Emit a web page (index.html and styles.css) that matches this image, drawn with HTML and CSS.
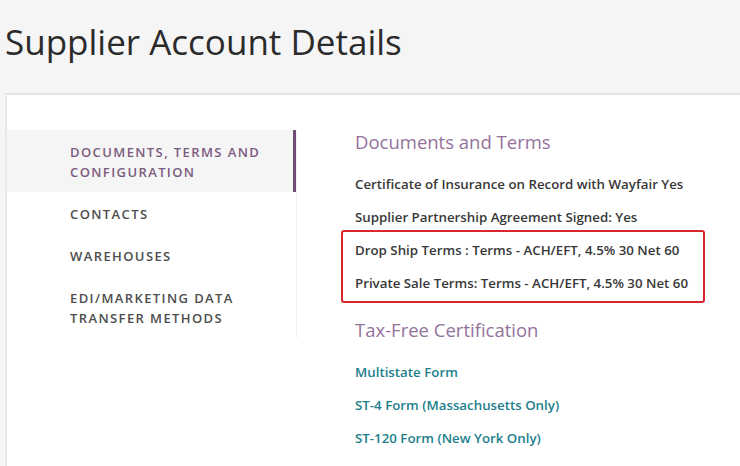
FILE: index.html
```html
<!DOCTYPE html>
<html>
<head>
<meta charset="utf-8">
<link rel="stylesheet" href="styles.css">
</head>
<body>
<h1 class="page-title">Supplier Account Details</h1>
<div class="card">
  <nav class="sidebar">
    <div class="nav-item active">DOCUMENTS, TERMS AND<br>CONFIGURATION</div>
    <div class="nav-item">CONTACTS</div>
    <div class="nav-item">WAREHOUSES</div>
    <div class="nav-item">EDI/MARKETING DATA<br>TRANSFER METHODS</div>
  </nav>
  <main class="content">
    <h2 class="section-title">Documents and Terms</h2>
    <p class="item">Certificate of Insurance on Record with Wayfair Yes</p>
    <p class="item">Supplier Partnership Agreement Signed: Yes</p>
    <div class="highlight">
      <p class="item">Drop Ship Terms : Terms - ACH/EFT, 4.5% 30 Net 60</p>
      <p class="item">Private Sale Terms: Terms - ACH/EFT, 4.5% 30 Net 60</p>
    </div>
    <h2 class="section-title tax">Tax-Free Certification</h2>
    <a class="item link" href="#">Multistate Form</a>
    <a class="item link" href="#">ST-4 Form (Massachusetts Only)</a>
    <a class="item link" href="#">ST-120 Form (New York Only)</a>
  </main>
</div>
</body>
</html>
```
FILE: styles.css
```css
html, body {
  margin: 0;
  padding: 0;
  height: 100%;
}
body {
  background: #f5f5f5;
  font-family: "Open Sans", "Liberation Sans", sans-serif;
  color: #333;
  overflow: hidden;
  display: flex;
  flex-direction: column;
}
.page-title {
  margin: 0;
  padding: 19px 0 0 5px;
  height: 93px;
  flex: none;
  box-sizing: border-box;
  font-size: 35px;
  font-weight: 400;
  line-height: 46px;
  color: #2b2b2b;
}
.card {
  flex: 1;
  margin-left: 5px;
  background: #fff;
  border-top: 2px solid #e4e4e4;
  border-left: 2px solid #e8e8e8;
  display: flex;
  padding-top: 35px;
  overflow: hidden;
}
.sidebar {
  width: 286px;
  flex: none;
  border-right: 3px solid transparent;
  align-self: flex-start;
  box-shadow: 1px 0 0 #f0f0f0;
}
.nav-item {
  padding: 12px 0 10px 63px;
  font-size: 13px;
  line-height: 20px;
  font-weight: 600;
  letter-spacing: 1.4px;
  color: #4d4d4d;
}
.nav-item.active {
  background: #f5f5f5;
  color: #7c5b80;
  margin-right: -3px;
  border-right: 3px solid #6f4d74;
}
.content {
  padding-left: 59px;
  display: flex;
  flex-direction: column;
  align-items: flex-start;
}
.section-title {
  margin: 0 0 20px;
  font-size: 18.5px;
  line-height: 24px;
  font-weight: 400;
  color: #94729a;
}
.section-title.tax {
  margin-top: 15px;
}
.item {
  margin: 0 0 13px;
  font-size: 13.3px;
  line-height: 20px;
  font-weight: 600;
  color: #383838;
}
.highlight {
  margin: -10px 0 0 -14px;
  padding: 8px 12px 8px;
  border: 2px solid #d9262c;
  border-radius: 3px;
  width: 336px;
}
.highlight .item:last-child {
  margin-bottom: 0;
}
.link {
  display: block;
  color: #22808c;
  text-decoration: none;
}
```
